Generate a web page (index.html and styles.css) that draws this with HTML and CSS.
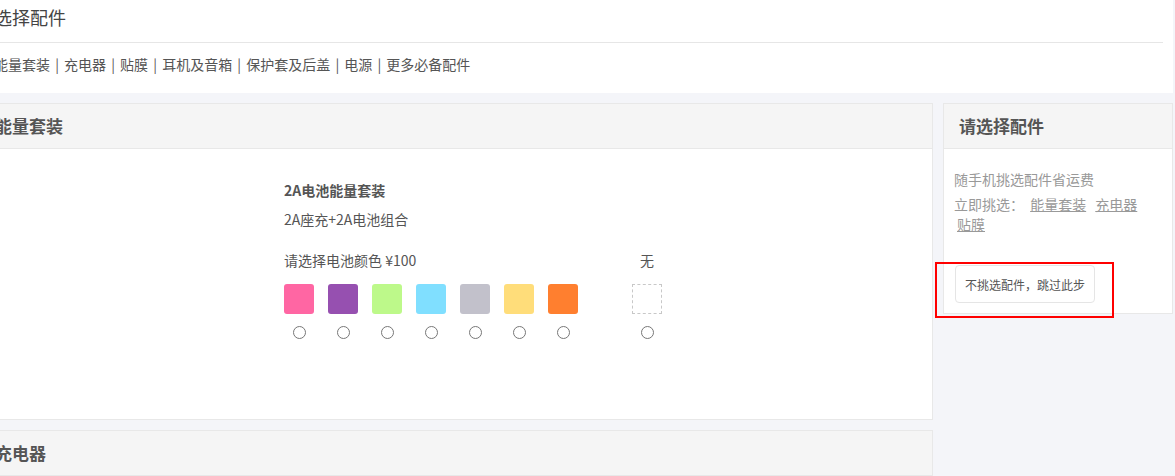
FILE: index.html
```html
<!DOCTYPE html>
<html lang="zh-CN">
<head>
<meta charset="utf-8">
<title>选择配件</title>
<link rel="stylesheet" href="styles.css">
</head>
<body>
<div class="page">
  <section class="top-panel">
    <h1 class="top-title">选择配件</h1>
    <nav class="top-nav">能量套装 <span class="sep">|</span> 充电器 <span class="sep">|</span> 贴膜 <span class="sep">|</span> 耳机及音箱 <span class="sep">|</span> 保护套及后盖 <span class="sep">|</span> 电源 <span class="sep">|</span> 更多必备配件</nav>
  </section>

  <div class="layout">
    <div class="main-col">
      <section class="card card-energy">
        <h2 class="card-head">能量套装</h2>
        <div class="card-body product-body">
          <div class="product">
            <div class="product-name">2A电池能量套装</div>
            <div class="product-desc">2A座充+2A电池组合</div>
            <div class="options">
              <div class="opt-group">
                <div class="opt-label">请选择电池颜色 ¥100</div>
                <div class="swatch-row">
                  <div class="opt"><span class="swatch sw-pink"></span><span class="radio"></span></div>
                  <div class="opt"><span class="swatch sw-purple"></span><span class="radio"></span></div>
                  <div class="opt"><span class="swatch sw-green"></span><span class="radio"></span></div>
                  <div class="opt"><span class="swatch sw-blue"></span><span class="radio"></span></div>
                  <div class="opt"><span class="swatch sw-gray"></span><span class="radio"></span></div>
                  <div class="opt"><span class="swatch sw-yellow"></span><span class="radio"></span></div>
                  <div class="opt"><span class="swatch sw-orange"></span><span class="radio"></span></div>
                </div>
              </div>
              <div class="opt-group none-group">
                <div class="opt-label none-label">无</div>
                <div class="swatch-row">
                  <div class="opt"><span class="swatch sw-none"></span><span class="radio"></span></div>
                </div>
              </div>
            </div>
          </div>
        </div>
      </section>
      <section class="card card-charger">
        <h2 class="card-head">充电器</h2>
        <div class="card-body charger-body"></div>
      </section>
    </div>

    <aside class="side-col">
      <section class="card side-card">
        <h2 class="card-head side-head">请选择配件</h2>
        <div class="side-body">
          <p class="side-tip">随手机挑选配件省运费</p>
          <p class="side-links">立即挑选： <a href="#">能量套装</a> <a href="#">充电器</a> <a href="#">贴膜</a></p>
          <button class="skip-btn" type="button">不挑选配件，跳过此步</button>
        </div>
        <div class="highlight"></div>
      </section>
    </aside>
  </div>
</div>
</body>
</html>
```

FILE: styles.css
```css
* { box-sizing: border-box; }

html, body {
  margin: 0;
  padding: 0;
}

body {
  background: #f4f5f9;
  font-family: "Noto Sans CJK SC", "Noto Sans", sans-serif;
  color: #666;
  overflow: hidden;
}

.page {
  margin-left: -22px;
  width: 1195px;
}

.top-panel {
  margin-left: 6px;
  background: #fff;
  padding: 0 10px 19px 10px;
}

.top-title {
  margin: 0;
  font-size: 18px;
  font-weight: normal;
  color: #444;
  line-height: 34px;
  padding-bottom: 8px;
  border-bottom: 1px solid #e6e6e6;
}

.top-nav {
  margin-top: 11px;
  font-size: 14px;
  line-height: 20px;
  color: #555;
}

.sep {
  margin: 0 2px;
}

.layout {
  display: grid;
  grid-template-columns: 955px 230px;
  gap: 10px;
  margin-top: 10px;
  align-items: start;
}

.main-col {
  display: flex;
  flex-direction: column;
  gap: 10px;
}

.card {
  background: #fff;
  border: 1px solid #e8e8e8;
}

.card-head {
  margin: 0;
  height: 45px;
  line-height: 44px;
  padding: 0 16px;
  font-size: 17px;
  font-weight: bold;
  color: #555;
  background: #f5f5f5;
  border-bottom: 1px solid #e8e8e8;
}

.product-body {
  height: 270px;
  padding: 31px 0 0 305px;
}

.product-name {
  font-size: 14px;
  font-weight: bold;
  line-height: 20px;
  color: #555;
}

.product-desc {
  margin-top: 9px;
  font-size: 14px;
  line-height: 20px;
  color: #555;
}

.options {
  display: flex;
  gap: 54px;
  margin-top: 21px;
}

.opt-label {
  font-size: 14px;
  line-height: 20px;
  color: #555;
  height: 20px;
  white-space: nowrap;
}

.none-label {
  text-align: center;
}

.swatch-row {
  display: flex;
  gap: 14px;
  margin-top: 14px;
}

.opt {
  display: flex;
  flex-direction: column;
  align-items: center;
  width: 30px;
}

.swatch {
  display: block;
  width: 30px;
  height: 30px;
  border-radius: 3px;
}

.sw-pink { background: #ff66a3; }
.sw-purple { background: #9650b0; }
.sw-green { background: #bdf98a; }
.sw-blue { background: #80dfff; }
.sw-gray { background: #c2c1cb; }
.sw-yellow { background: #ffdd7a; }
.sw-orange { background: #ff7f2f; }
.sw-none {
  border: 1px dashed #c8c8c8;
  border-radius: 0;
  background: #fff;
}

.radio {
  display: block;
  width: 13px;
  height: 13px;
  margin-top: 12px;
  border: 1px solid #777;
  border-radius: 50%;
  background: #fff;
}

.charger-body {
  height: 60px;
}

.side-card {
  position: relative;
}

.side-head {
  padding: 0 15px;
}

.side-body {
  padding: 20px 10px 10px 10px;
}

.side-tip {
  margin: 0 0 5px 0;
  font-size: 14px;
  line-height: 20px;
  color: #999;
}

.side-links {
  margin: 0;
  font-size: 14px;
  line-height: 20px;
  color: #999;
}

.side-links a {
  display: inline-block;
  white-space: nowrap;
  color: #999;
  text-decoration: underline;
  margin: 0 3px;
}

.skip-btn {
  display: block;
  margin-top: 31px;
  margin-left: 1px;
  height: 38px;
  padding: 0 9px;
  font-family: inherit;
  font-size: 12px;
  color: #555;
  background: #fff;
  border: 1px solid #e5e5e5;
  border-radius: 4px;
}

.highlight {
  position: absolute;
  left: -9px;
  top: 158px;
  width: 179px;
  height: 56px;
  border: 2px solid #ff0000;
  pointer-events: none;
}
```
